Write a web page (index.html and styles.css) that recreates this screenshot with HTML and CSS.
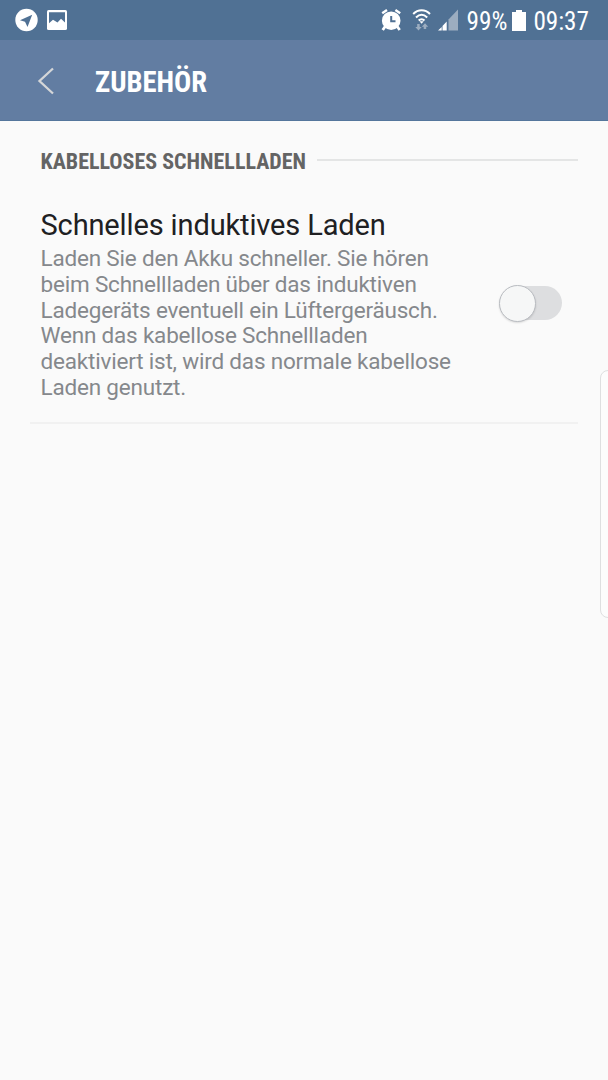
FILE: index.html
```html
<!DOCTYPE html>
<html lang="de">
<head>
<meta charset="utf-8">
<title>Zubehör</title>
<link rel="stylesheet" href="styles.css">
</head>
<body>
<div class="status">
  <svg class="notices" width="54" height="24" viewBox="15 8 54 24">
    <circle cx="26.5" cy="20" r="11.2" fill="#fff"/>
    <path d="M32.200 14.800 20 20.300 25 21.800 27.500 27Z" fill="#507194"/>
    <rect x="47" y="10" width="20" height="20" rx="1.6" fill="#fff"/>
    <path d="M49 12.2H65V22.5L61 18.7 57.5 22.5 53 19.7 49 23.2Z" fill="#507194"/>
  </svg>
  <div class="indicators">
    <svg class="alarm" width="78" height="24" viewBox="381 8 78 24">
      <g stroke="#fff" fill="none">
        <circle cx="391.2" cy="20.7" r="9.3" fill="#fff" stroke="none"/>
        <path d="M382.2 13.2 387 10M395.400 10 400.200 13.2" stroke-width="2.4"/>
        <path d="M385.500 26 382.700 30M396.900 26 399.700 30" stroke-width="2.8"/>
        <path d="M391.2 16V21.200H395.500" stroke="#507194" stroke-width="2"/>
        <path d="M413.200 14C418 9 425.200 9 430 14M416 17.500C419.500 14 423.700 14 427.200 17.500M418.700 20.500C420.500 18.700 422.700 18.700 424.500 20.500" stroke-width="2"/>
      </g>
      <path d="M419.500 21.300H423.700L421.600 23.700Z" fill="#fff"/>
      <g fill="#9cadc0">
        <path d="M417.200 24H419.700V27H421.700L418.500 30.500 415.300 27H417.200Z"/>
        <path d="M423.700 29V26.700H421.800L425 23.200 428.200 26.700H426.200V29Z"/>
        <path d="M448.500 19.500 458 9.500V30.500H448.500Z"/>
      </g>
      <path d="M438 30.500 441.700 27V30.500ZM442.500 26 446.700 21.500V30.500H442.500Z" fill="#fff"/>
    </svg>
    <span class="percent">99%</span>
    <svg class="battery" width="14" height="22" viewBox="0 0 14 22"><path d="M0 2H4V0H10V2H14V21H0Z" fill="#fff"/></svg>
    <span class="clock">09:37</span>
  </div>
</div>
<header class="bar">
  <svg class="back" width="18" height="28" viewBox="0 0 18 28"><path d="M16 1.500 2.500 14 16 26.500" fill="none" stroke="#d4d6d8" stroke-width="2.300"/></svg>
  <h1 class="title">ZUBEHÖR</h1>
</header>
<main class="content">
  <div class="section"><h2 class="section-title">KABELLOSES SCHNELLLADEN</h2><span class="rule"></span></div>
  <section class="setting">
    <div class="copy">
      <h3 class="name">Schnelles induktives Laden</h3>
      <p class="description">Laden Sie den Akku schneller. Sie hören<br>beim Schnellladen über das induktiven<br>Ladegeräts eventuell ein Lüftergeräusch.<br>Wenn das kabellose Schnellladen<br>deaktiviert ist, wird das normale kabellose<br>Laden genutzt.</p>
    </div>
    <div class="switch" role="switch" aria-checked="false"><span class="knob"></span></div>
  </section>
</main>
<div class="edge-handle"></div>
</body>
</html>
```
FILE: styles.css
```css
* { box-sizing: border-box; }
body { margin: 0; width: 608px; height: 1080px; overflow: hidden; position: relative; background: #fafafa; font-family: Roboto, sans-serif; }
h1, h2, h3, p { margin: 0; white-space: nowrap; }
svg { display: block; flex: none; }
.status { height: 40px; padding: 0 19px 0 15px; display: flex; justify-content: space-between; align-items: flex-start; background: #507194; color: #fff; }
.notices { margin-top: 8px; }
.indicators { display: flex; align-items: flex-start; padding-top: 8px; }
.percent, .clock { margin-top: 1px; font: 400 25.2px/26px "Roboto Condensed", Roboto, sans-serif; font-stretch: 75%; white-space: nowrap; }
.percent { margin-left: 8px; }
.battery { margin: 2px 7px 0 5px; }
.bar { height: 81px; display: flex; align-items: center; padding: 2px 0 0 37px; background: #627da2; border-bottom: 1px solid #54769c; color: #fff; }
.title { margin: 2px 0 0 40px; font: 700 28.6px/34px "Roboto Condensed", Roboto, sans-serif; font-stretch: 75%; }
.content { padding: 26px 30px 0 30px; }
.section { display: flex; align-items: center; gap: 11px; padding-left: 10.5px; height: 28px; }
.section-title { padding-top: 1px; font: 700 22px/28px "Roboto Condensed", Roboto, sans-serif; font-stretch: 75%; color: #646464; }
.rule { flex: 1; height: 2px; margin-bottom: 2px; background: #e4e5e5; }
.setting { display: flex; justify-content: space-between; margin-top: 31px; height: 218px; padding: 0 16px 0 10.5px; border-bottom: 2px solid #f1f1f1; }
.name { font-size: 29px; line-height: 38px; font-weight: 400; letter-spacing: -0.13px; color: #202022; }
.description { margin-top: 2px; font-size: 22.5px; line-height: 25.8px; letter-spacing: -0.19px; color: #85888c; }
.switch { position: relative; width: 62px; height: 34px; margin-top: 80px; border-radius: 17px; background: #dddee0; }
.knob { position: absolute; left: -1px; top: -1px; width: 37px; height: 37px; border: 1px solid #b9bcc1; border-radius: 50%; background: #f6f7f7; box-shadow: 0 1px 2px #0002; }
.edge-handle { position: absolute; right: -10px; top: 370px; width: 18px; height: 248px; border: 1px solid #dedfe0; border-radius: 8px; background: #fcfcfc; }
```
